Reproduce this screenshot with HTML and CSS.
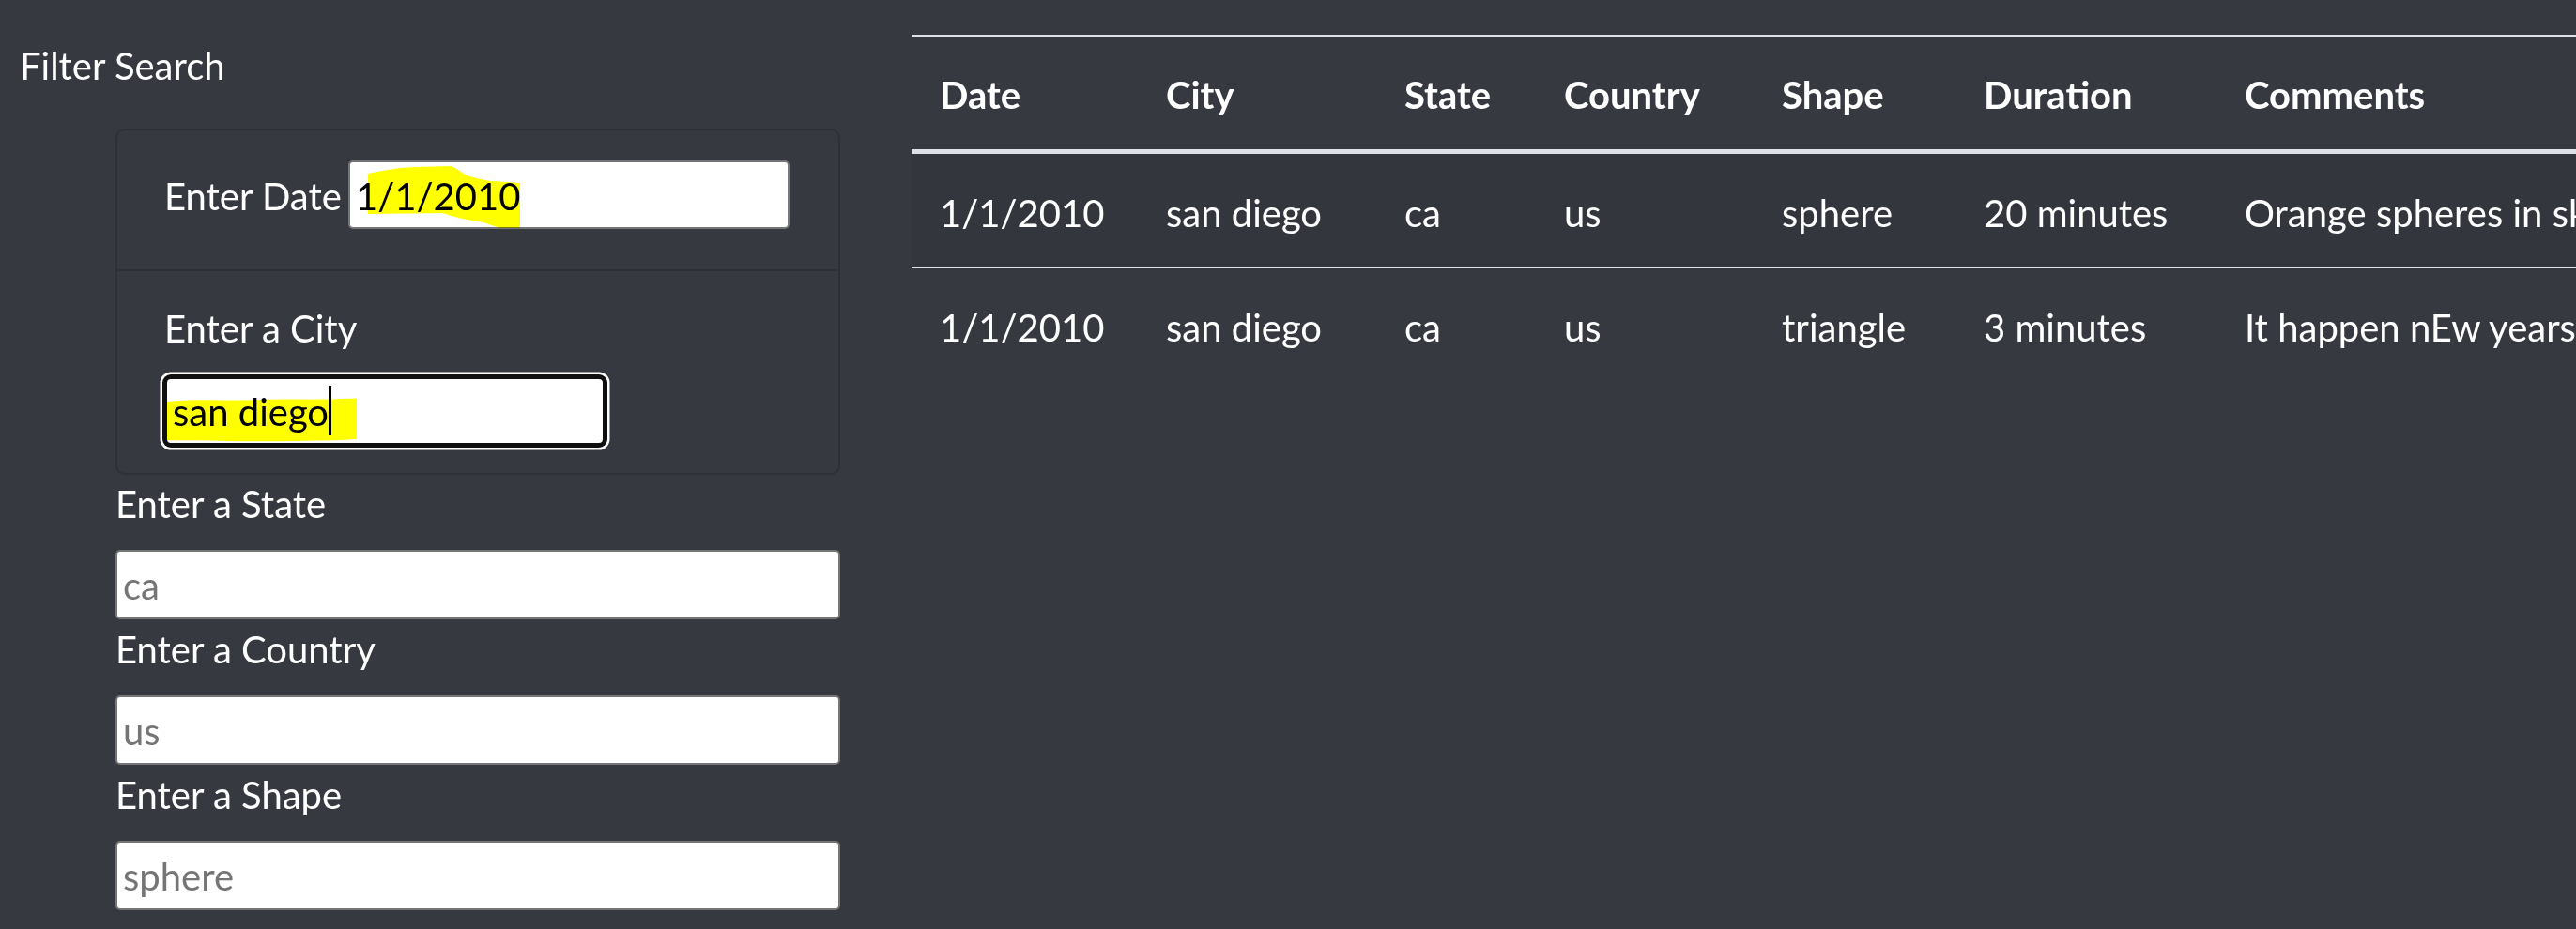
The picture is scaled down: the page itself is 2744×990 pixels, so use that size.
FILE: index.html
```html
<!DOCTYPE html>
<html lang="en">
<head>
<meta charset="utf-8">
<title>UFO Sightings – Filter Search</title>
<link rel="stylesheet" href="styles.css">
</head>
<body>
<div class="page">
  <aside class="sidebar">
    <h1 class="title">Filter Search</h1>
    <form class="filters">
      <ul class="filter-card">
        <li class="filter-item filter-item-inline">
          <label for="datetime" class="inline-label">Enter Date</label>
          <span class="field">
            <input id="datetime" class="field-input" type="text" value="1/1/2010">
            <svg class="marker marker-date" viewBox="0 0 470 74" width="470" height="74" aria-hidden="true">
              <path d="M21 14 C35 11 55 7 72 7 L110 6 C116 9 121 13 126 16 C136 19 144 21 152 22 L183 24 L183 72 L162 72 C154 70 148 67 143 66 L122 62 C112 60 104 57 100 56 L21 57 Z" fill="#ffff00"/>
            </svg>
          </span>
        </li>
        <li class="filter-item">
          <label for="city" class="block-label">Enter a City</label>
          <span class="field">
            <input id="city" class="field-input field-focused" type="text" value="san diego">
            <svg class="marker marker-city" viewBox="0 0 470 74" width="470" height="74" aria-hidden="true">
              <path d="M3 27 C20 25 40 25 60 25.5 C90 26 110 24 140 24.5 C170 25 190 24 205 23.5 L205 67 C190 68 170 68.5 140 69 C110 69.5 80 69.5 50 68.5 C30 68 15 68.5 3 68 Z" fill="#ffff00"/>
            </svg>
            <span class="caret"></span>
          </span>
        </li>
      </ul>
      <label for="state" class="block-label">Enter a State</label>
      <input id="state" class="wide-input" type="text" placeholder="ca">
      <label for="country" class="block-label">Enter a Country</label>
      <input id="country" class="wide-input" type="text" placeholder="us">
      <label for="shape" class="block-label">Enter a Shape</label>
      <input id="shape" class="wide-input" type="text" placeholder="sphere">
    </form>
  </aside>
  <section class="results">
    <table class="ufo-table">
      <colgroup>
        <col class="col-date">
        <col class="col-city">
        <col class="col-state">
        <col class="col-country">
        <col class="col-shape">
        <col class="col-duration">
        <col class="col-comments">
      </colgroup>
      <thead>
        <tr>
          <th>Date</th>
          <th>City</th>
          <th>State</th>
          <th>Country</th>
          <th>Shape</th>
          <th>Duration</th>
          <th>Comments</th>
        </tr>
      </thead>
      <tbody>
        <tr>
          <td>1/1/2010</td>
          <td>san diego</td>
          <td>ca</td>
          <td>us</td>
          <td>sphere</td>
          <td>20 minutes</td>
          <td>Orange spheres in sky moving slowly over the ocean</td>
        </tr>
        <tr>
          <td>1/1/2010</td>
          <td>san diego</td>
          <td>ca</td>
          <td>us</td>
          <td>triangle</td>
          <td>3 minutes</td>
          <td>It happen nEw years eve right after midnight</td>
        </tr>
      </tbody>
    </table>
  </section>
</div>
</body>
</html>
```

FILE: styles.css
```css
html, body {
  margin: 0;
  padding: 0;
}

body {
  background: #363940;
  color: #ffffff;
  font-family: Lato, "Open Sans", sans-serif;
  font-size: 40px;
  line-height: 60px;
  overflow: hidden;
  width: 2744px;
  height: 990px;
}

.page {
  display: flex;
  align-items: flex-start;
  padding-top: 37px;
  width: 2744px;
  overflow: hidden;
}

/* ---------- sidebar ---------- */
.sidebar {
  flex: none;
  width: 971px;
  box-sizing: border-box;
  padding-left: 21px;
}

.title {
  margin: 0;
  font-size: 40px;
  font-weight: 400;
  line-height: 60px;
  padding-top: 3px;
}

.filters {
  margin: 37px 0 0 102px;
  width: 772px;
}

.filter-card {
  list-style: none;
  margin: 0;
  padding: 0;
  border: 2px solid rgba(0, 0, 0, 0.14);
  border-radius: 10px;
}

.filter-item {
  padding: 30px 50px 29px;
}

.filter-item + .filter-item {
  border-top: 2px solid rgba(0, 0, 0, 0.14);
}

.filter-item-inline {
  display: flex;
  align-items: center;
  padding: 32px 50px 43px;
}

.inline-label {
  flex: none;
  width: 196px;
  padding-top: 3px;
  line-height: 57px;
  white-space: nowrap;
}

.block-label {
  display: block;
  margin: 0 0 20px;
  padding-top: 3px;
  line-height: 57px;
  white-space: nowrap;
}

.filter-item .block-label {
  margin-bottom: 22px;
}

.field {
  position: relative;
  display: inline-block;
  width: 470px;
  vertical-align: top;
}

.field-input,
.wide-input {
  display: block;
  box-sizing: border-box;
  margin: 0;
  border: 2px solid #767676;
  border-radius: 5px;
  background: #ffffff;
  color: #000000;
  font-family: Lato, "Open Sans", sans-serif;
  font-size: 40px;
  padding: 2px 6px 0;
  outline: none;
}

.field-input {
  width: 470px;
  height: 73px;
}

.field-focused {
  height: 74px;
  border: 3px solid #101010;
  border-radius: 7px;
  padding: 2px 6px 0;
  box-shadow: 0 0 0 2px #101010, 0 0 0 4.5px #ffffff;
}

.wide-input {
  width: 772px;
  height: 74px;
  margin-bottom: 1px;
}

.wide-input::placeholder {
  color: #757575;
  opacity: 1;
}

.marker {
  position: absolute;
  left: 0;
  top: 0;
  pointer-events: none;
  mix-blend-mode: multiply;
}

.caret {
  position: absolute;
  left: 175px;
  top: 10px;
  width: 3px;
  height: 53px;
  background: #000000;
}

/* ---------- results table ---------- */
.results {
  flex: none;
}

.ufo-table {
  border-collapse: separate;
  border-spacing: 0;
  table-layout: fixed;
  width: 2790px;
  color: #ffffff;
}

.col-date { width: 241px; }
.col-city { width: 254px; }
.col-state { width: 170px; }
.col-country { width: 232px; }
.col-shape { width: 215px; }
.col-duration { width: 278px; }
.col-comments { width: 1400px; }

.ufo-table th,
.ufo-table td {
  padding: 33px 30px 27px;
  line-height: 60px;
  text-align: left;
  white-space: nowrap;
}

.ufo-table th {
  padding-top: 32px;
  padding-bottom: 28px;
  font-weight: 700;
  vertical-align: bottom;
  border-top: 2px solid #dee2e6;
  border-bottom: 5px solid #dee2e6;
}

.ufo-table td {
  vertical-align: top;
}

.ufo-table tbody tr:nth-child(odd) td {
  background: rgba(0, 0, 0, 0.04);
}

.ufo-table tbody tr + tr td {
  border-top: 2px solid #dee2e6;
}
```
